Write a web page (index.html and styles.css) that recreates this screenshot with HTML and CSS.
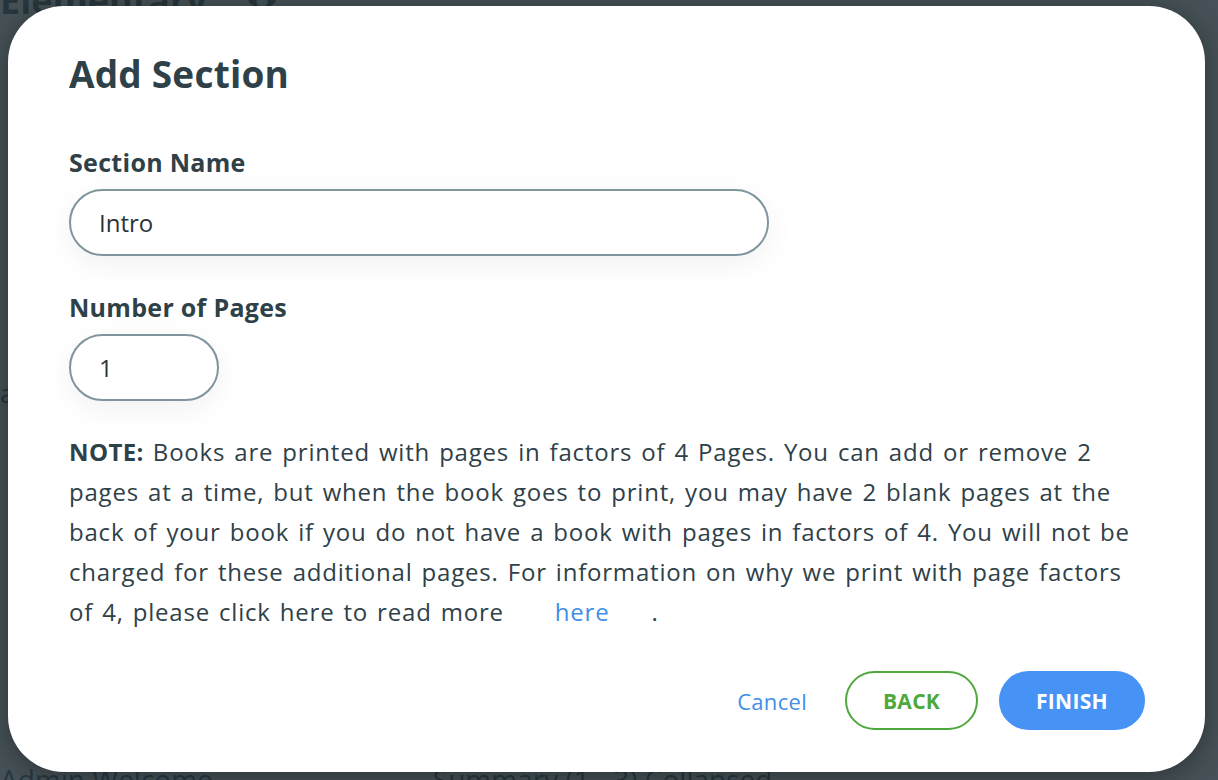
FILE: index.html
```html
<!DOCTYPE html>
<html lang="en">
<head>
<meta charset="utf-8">
<title>Add Section</title>
<link rel="stylesheet" href="styles.css">
</head>
<body>
<div class="page">
  <div class="page-top">
    <span class="page-title">Elementary</span>
    <span class="page-star">✿</span>
  </div>
  <div class="page-mid">a</div>
  <div class="page-bottom">
    <span>Admin Welcome</span>
    <span class="page-sum">Summary (1 - 3) Collapsed</span>
  </div>
</div>
<div class="overlay">
  <div class="modal">
    <h1 class="modal-title">Add Section</h1>
    <label class="field-label" for="secname">Section Name</label>
    <input class="field field-wide" id="secname" type="text" value="Intro">
    <label class="field-label" for="pages">Number of Pages</label>
    <input class="field field-small" id="pages" type="text" value="1">
    <p class="note"><strong>NOTE:</strong> Books are printed with pages in factors of 4 Pages. You can add or remove 2 pages at a time, but when the book goes to print, you may have 2 blank pages at the back of your book if you do not have a book with pages in factors of 4. You will not be charged for these additional pages. For information on why we print with page factors of 4, please click here to read more <a class="note-link" href="#">here</a>.</p>
    <div class="actions">
      <a class="btn-cancel" href="#">Cancel</a>
      <button class="btn btn-back" type="button">BACK</button>
      <button class="btn btn-finish" type="button">FINISH</button>
    </div>
  </div>
</div>
</body>
</html>
```
FILE: styles.css
```css
* { box-sizing: border-box; }
html, body {
  margin: 0;
  width: 1218px;
  height: 780px;
  overflow: hidden;
}
body {
  font-family: "Open Sans", "Lato", sans-serif;
  background: #ffffff;
  color: #2f4148;
  position: relative;
}
.page {
  height: 780px;
  display: flex;
  flex-direction: column;
  justify-content: space-between;
}
.page-top {
  display: flex;
  gap: 40px;
  margin-top: -24px;
  font-size: 36px;
  font-weight: 700;
  color: #2f4148;
}
.page-mid {
  font-size: 26px;
  color: #2f4148;
}
.page-bottom {
  display: flex;
  gap: 220px;
  margin-bottom: -18px;
  font-size: 28px;
  color: #2f4148;
}
.page-bottom span:first-child { color: #1f4f7a; }
.overlay {
  position: absolute;
  inset: 0;
  background: rgba(38, 52, 58, 0.86);
  display: flex;
  padding: 6px 13px 8px 8px;
}
.modal {
  flex: 1;
  background: #ffffff;
  border-radius: 56px;
  padding: 46px 61px 0 61px;
  display: flex;
  flex-direction: column;
  align-items: flex-start;
  box-shadow: 0 4px 24px rgba(0, 0, 0, 0.35);
}
.modal-title {
  margin: 0 0 51px 0;
  font-size: 37px;
  line-height: 44px;
  font-weight: 700;
  letter-spacing: 0.2px;
  color: #2f4148;
}
.field-label {
  font-size: 25px;
  line-height: 30px;
  font-weight: 700;
  letter-spacing: 0.3px;
  color: #2f4148;
  margin-bottom: 12px;
}
.field {
  font-family: inherit;
  font-size: 24px;
  color: #2c3337;
  height: 67px;
  border: 2px solid #7f959e;
  border-radius: 34px;
  padding: 0 28px;
  background: #fff;
  outline: none;
  box-shadow: 0 8px 30px rgba(0, 0, 0, 0.06);
}
.field-wide { width: 700px; margin-bottom: 36px; }
.field-small { width: 150px; margin-bottom: 31px; }
.note {
  margin: 0;
  font-size: 24px;
  line-height: 40px;
  letter-spacing: 0.8px;
  word-spacing: 2px;
  color: #2f4148;
  width: 1062px;
}
.note strong { font-weight: 700; letter-spacing: 0.4px; }
.note-link {
  color: #3f8fe8;
  text-decoration: none;
  margin: 0 42px 0 42px;
}
.actions {
  align-self: flex-end;
  display: flex;
  align-items: center;
  margin-top: 39px;
  margin-right: -1px;
}
.btn-cancel {
  color: #3f8fe8;
  text-decoration: none;
  font-size: 22px;
  letter-spacing: 0.3px;
  margin-right: 38px;
}
.btn {
  font-family: inherit;
  font-size: 21px;
  font-weight: 700;
  letter-spacing: 0.3px;
  height: 59px;
  border-radius: 30px;
  cursor: pointer;
}
.btn-back {
  width: 133px;
  background: #fff;
  border: 2px solid #4ea83c;
  color: #4ea83c;
  margin-right: 21px;
}
.btn-finish {
  width: 146px;
  background: #4693f5;
  border: 2px solid #4693f5;
  color: #fff;
}
```
